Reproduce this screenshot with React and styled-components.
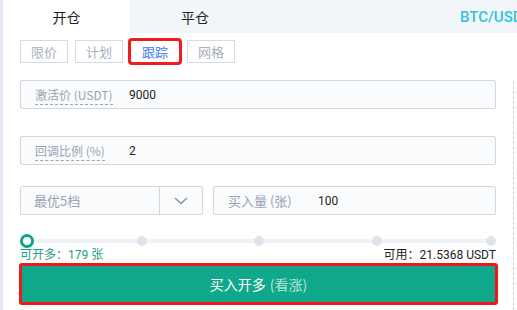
import styled, { createGlobalStyle } from "styled-components";

const GlobalStyle = createGlobalStyle`
    body {
        margin: 0;
        background: #fff;
        font-family: "Roboto", "Noto Sans CJK SC", sans-serif;
    }
`;

const Page = styled.div`
    width: 517px;
    height: 310px;
    display: flex;
    overflow: hidden;
    background: #fff;
`;
const SideStrip = styled.div`
    width: 3px;
    background: #e4e9f3;
`;
const Panel = styled.div`
    flex: 1;
    display: flex;
    flex-direction: column;
    position: relative;
    min-width: 0;
`;
const TabBar = styled.div`
    height: 33px;
    display: flex;
    align-items: center;
    background: #f2f5fa;
    overflow: hidden;
`;
const Tab = styled.div`
    flex: none;
    width: ${(p) => (p.$first ? "127px" : "130px")};
    height: 100%;
    display: flex;
    align-items: center;
    justify-content: center;
    font-size: 14px;
    color: #222;
    background: ${(p) => (p.$active ? "#fff" : "transparent")};
    font-family: "Noto Sans CJK SC", sans-serif;
`;
const Pair = styled.div`
    flex: none;
    margin-left: 200px;
    font-size: 15px;
    font-weight: 500;
    color: #2fc3df;
    white-space: nowrap;
`;
const Body = styled.div`
    padding: 7px 21px 0 17px;
    display: flex;
    flex-direction: column;
`;
const TypeRow = styled.div`
    display: flex;
    gap: 7px;
    margin-bottom: 17px;
`;
const TypeBtn = styled.div`
    width: ${(p) => (p.$active ? "48px" : "46px")};
    height: 21px;
    border: 1px solid ${(p) => (p.$active ? "#f01d1d" : "#d6dae2")};
    display: flex;
    align-items: center;
    justify-content: center;
    font-size: 13px;
    color: ${(p) => (p.$active ? "#3d7bf2" : "#a9afbd")};
    font-family: "Noto Sans CJK SC", sans-serif;
    outline: ${(p) => (p.$active ? "3px solid #f01d1d" : "none")};
    outline-offset: ${(p) => (p.$active ? "-1px" : "0")};
    border-radius: ${(p) => (p.$active ? "2px" : "0")};
`;
const Field = styled.div`
    height: 27px;
    border: 1px solid #d3d8e0;
    border-radius: 2px;
    background: #fafbfd;
    display: flex;
    align-items: center;
    padding-left: 14px;
    margin-bottom: ${(p) => p.$mb || 0}px;
    flex: ${(p) => (p.$grow ? 1 : "none")};
`;
const Label = styled.span`
    font-size: ${(p) => p.$size || 12}px;
    color: #9aa2b4;
    width: ${(p) => p.$w}px;
    font-family: "Noto Sans CJK SC", sans-serif;
`;
const Dashed = styled.span`
    border-bottom: 1px dashed #9aa2b4;
    padding-bottom: 1px;
`;
const Value = styled.span`
    font-size: 12px;
    color: #1d1d1d;
`;
const Row = styled.div`
    display: flex;
    gap: 10px;
`;
const Select = styled.div`
    width: 181px;
    height: 27px;
    border: 1px solid #d3d8e0;
    border-radius: 2px;
    background: #fafbfd;
    display: flex;
`;
const SelectText = styled.div`
    flex: 1;
    display: flex;
    align-items: center;
    padding-left: 13px;
    font-size: 13px;
    color: #9aa2b4;
    font-family: "Noto Sans CJK SC", sans-serif;
`;
const SelectArrow = styled.div`
    width: 42px;
    border-left: 1px solid #d3d8e0;
    display: flex;
    align-items: center;
    justify-content: center;
`;
const Slider = styled.div`
    position: relative;
    height: 14px;
    margin-top: 19px;
`;
const Track = styled.div`
    position: absolute;
    left: 6px;
    right: 4px;
    top: 5px;
    height: 4px;
    background: #eff2f7;
`;
const Dot = styled.div`
    position: absolute;
    top: 2px;
    width: 10px;
    height: 10px;
    border-radius: 50%;
    background: #dfe4ec;
`;
const Knob = styled.div`
    position: absolute;
    left: 0;
    top: 0;
    width: 8px;
    height: 8px;
    border: 3px solid #0fa487;
    border-radius: 50%;
    background: #fff;
`;
const InfoRow = styled.div`
    display: flex;
    justify-content: space-between;
    font-size: 12px;
    line-height: 14px;
    font-family: "Roboto", "Noto Sans CJK SC", sans-serif;
`;
const Avail = styled.span`
    color: ${(p) => p.$color};
`;
const BuyButton = styled.div`
    margin-top: 1px;
    margin-left: -1px;
    margin-right: -2px;
    height: 36px;
    border: 3px solid #f01818;
    border-radius: 3px;
    background: #0fa88a;
    display: flex;
    align-items: center;
    justify-content: center;
    font-size: 14px;
    color: #fff;
    font-family: "Noto Sans CJK SC", sans-serif;
`;
const Soft = styled.span`
    color: rgba(255, 255, 255, 0.7);
    margin-left: 4px;
`;
const DashLine = styled.div`
    position: absolute;
    right: 3px;
    top: 81px;
    bottom: 0;
    border-left: 1px dashed #c9ced8;
`;

const dots = [117, 234, 352, 466];

const App = () => {
    return (
        <>
            <GlobalStyle />
            <Page>
                <SideStrip />
                <Panel>
                    <TabBar>
                        <Tab $active $first>开仓</Tab>
                        <Tab>平仓</Tab>
                        <Pair>BTC/USDT</Pair>
                    </TabBar>
                    <Body>
                        <TypeRow>
                            <TypeBtn>限价</TypeBtn>
                            <TypeBtn>计划</TypeBtn>
                            <TypeBtn $active>跟踪</TypeBtn>
                            <TypeBtn>网格</TypeBtn>
                        </TypeRow>
                        <Field $mb={27}>
                            <Label $w={94}>
                                <Dashed>激活价 (USDT)</Dashed>
                            </Label>
                            <Value>9000</Value>
                        </Field>
                        <Field $mb={21}>
                            <Label $w={94}>
                                <Dashed>回调比例 (%)</Dashed>
                            </Label>
                            <Value>2</Value>
                        </Field>
                        <Row>
                            <Select>
                                <SelectText>最优5档</SelectText>
                                <SelectArrow>
                                    <svg width="14" height="8" viewBox="0 0 14 8">
                                        <path d="M1 1l6 5.5L13 1" fill="none" stroke="#8a93a6" strokeWidth="1.6" />
                                    </svg>
                                </SelectArrow>
                            </Select>
                            <Field $grow>
                                <Label $w={90} $size={13}>买入量 (张)</Label>
                                <Value>100</Value>
                            </Field>
                        </Row>
                        <Slider>
                            <Track />
                            {dots.map((x) => (
                                <Dot key={x} style={{ left: x }} />
                            ))}
                            <Knob />
                        </Slider>
                        <InfoRow>
                            <Avail $color="#1a9c80">可开多：179 张</Avail>
                            <Avail $color="#222">可用：21.5368 USDT</Avail>
                        </InfoRow>
                        <BuyButton>
                            买入开多<Soft>(看涨)</Soft>
                        </BuyButton>
                    </Body>
                    <DashLine />
                </Panel>
            </Page>
        </>
    );
};

export default App;
